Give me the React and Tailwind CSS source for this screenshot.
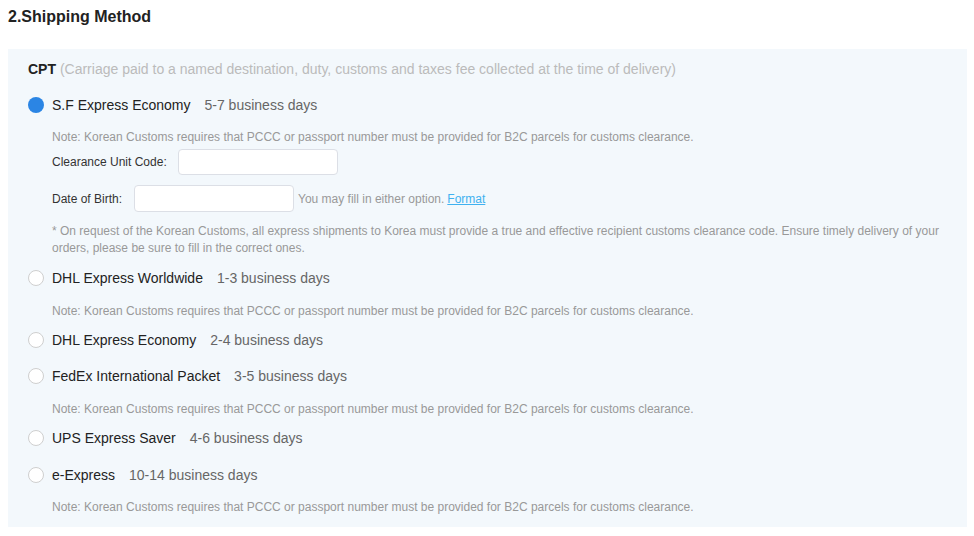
import React from "react";

const NOTE =
  "Note: Korean Customs requires that PCCC or passport number must be provided for B2C parcels for customs clearance.";

function Radio({ checked }) {
  return checked ? (
    <span className="inline-block w-4 h-4 rounded-full bg-[#2b85e4] shrink-0" />
  ) : (
    <span className="inline-block w-4 h-4 rounded-full border border-[#cfcfcf] bg-white shrink-0" />
  );
}

function Option({ name, days, checked, extra = "" }) {
  return (
    <div className={"flex items-center h-[36px] " + extra}>
      <Radio checked={checked} />
      <span className="ml-2 text-[14px] text-[#222]">{name}</span>
      <span className="ml-[14px] text-[14px] text-[#666]">{days}</span>
    </div>
  );
}

function Note({ extra = "mt-[6px] mb-[2px]" }) {
  return (
    <div className={"pl-6 text-[12px] leading-[18px] text-[#999] " + extra}>{NOTE}</div>
  );
}

export default function App() {
  return (
    <div
      className="w-[974px] h-[536px] bg-white"
      style={{ fontFamily: '"Liberation Sans", Arial, sans-serif' }}
    >
      <div className="pl-2 pt-[7px] h-[49px]">
        <h2 className="text-[16px] font-bold leading-[20px] text-[#222]">2.Shipping Method</h2>
      </div>
      <div className="ml-2 w-[959px] bg-[#f3f8fc] pl-5 pr-5 pt-[10px] pb-[8px]">
        <div className="h-[20px] leading-[20px] text-[14px] mb-[8px]">
          <span className="font-bold text-[#222]">CPT</span>
          <span className="text-[#bbb]">
            {" "}(Carriage paid to a named destination, duty, customs and taxes fee collected at the time of delivery)
          </span>
        </div>

        <Option name="S.F Express Economy" days="5-7 business days" checked />
        <Note extra="mt-[5px] mb-[3px]" />
        <div className="pl-6 flex items-center text-[12px] text-[#333]">
          <span className="w-[126px]">Clearance Unit Code:</span>
          <div className="w-[160px] h-[26px] bg-white border border-[#dcdfe6] rounded-[4px]" />
        </div>
        <div className="pl-6 flex items-center mt-[10px] text-[12px] text-[#333]">
          <span className="w-[82px]">Date of Birth:</span>
          <div className="w-[160px] h-[27px] bg-white border border-[#dcdfe6] rounded-[4px]" />
          <span className="ml-1 text-[#999]">You may fill in either option. </span>
          <span className="ml-[3px] text-[#3fb1f0] underline">Format</span>
        </div>
        <div className="pl-6 mt-[11px] mb-[3px] text-[12px] leading-[17px] text-[#999]">
          * On request of the Korean Customs, all express shipments to Korea must provide a true and effective recipient customs clearance code. Ensure timely delivery of your orders, please be sure to fill in the correct ones.
        </div>

        <Option name="DHL Express Worldwide" days="1-3 business days" />
        <Note />
        <Option name="DHL Express Economy" days="2-4 business days" />
        <Option name="FedEx International Packet" days="3-5 business days" />
        <Note />
        <Option name="UPS Express Saver" days="4-6 business days" />
        <Option name="e-Express" days="10-14 business days" extra="mt-[1px]" />
        <Note extra="mt-[5px] mb-[3px]" />
      </div>
    </div>
  );
}
